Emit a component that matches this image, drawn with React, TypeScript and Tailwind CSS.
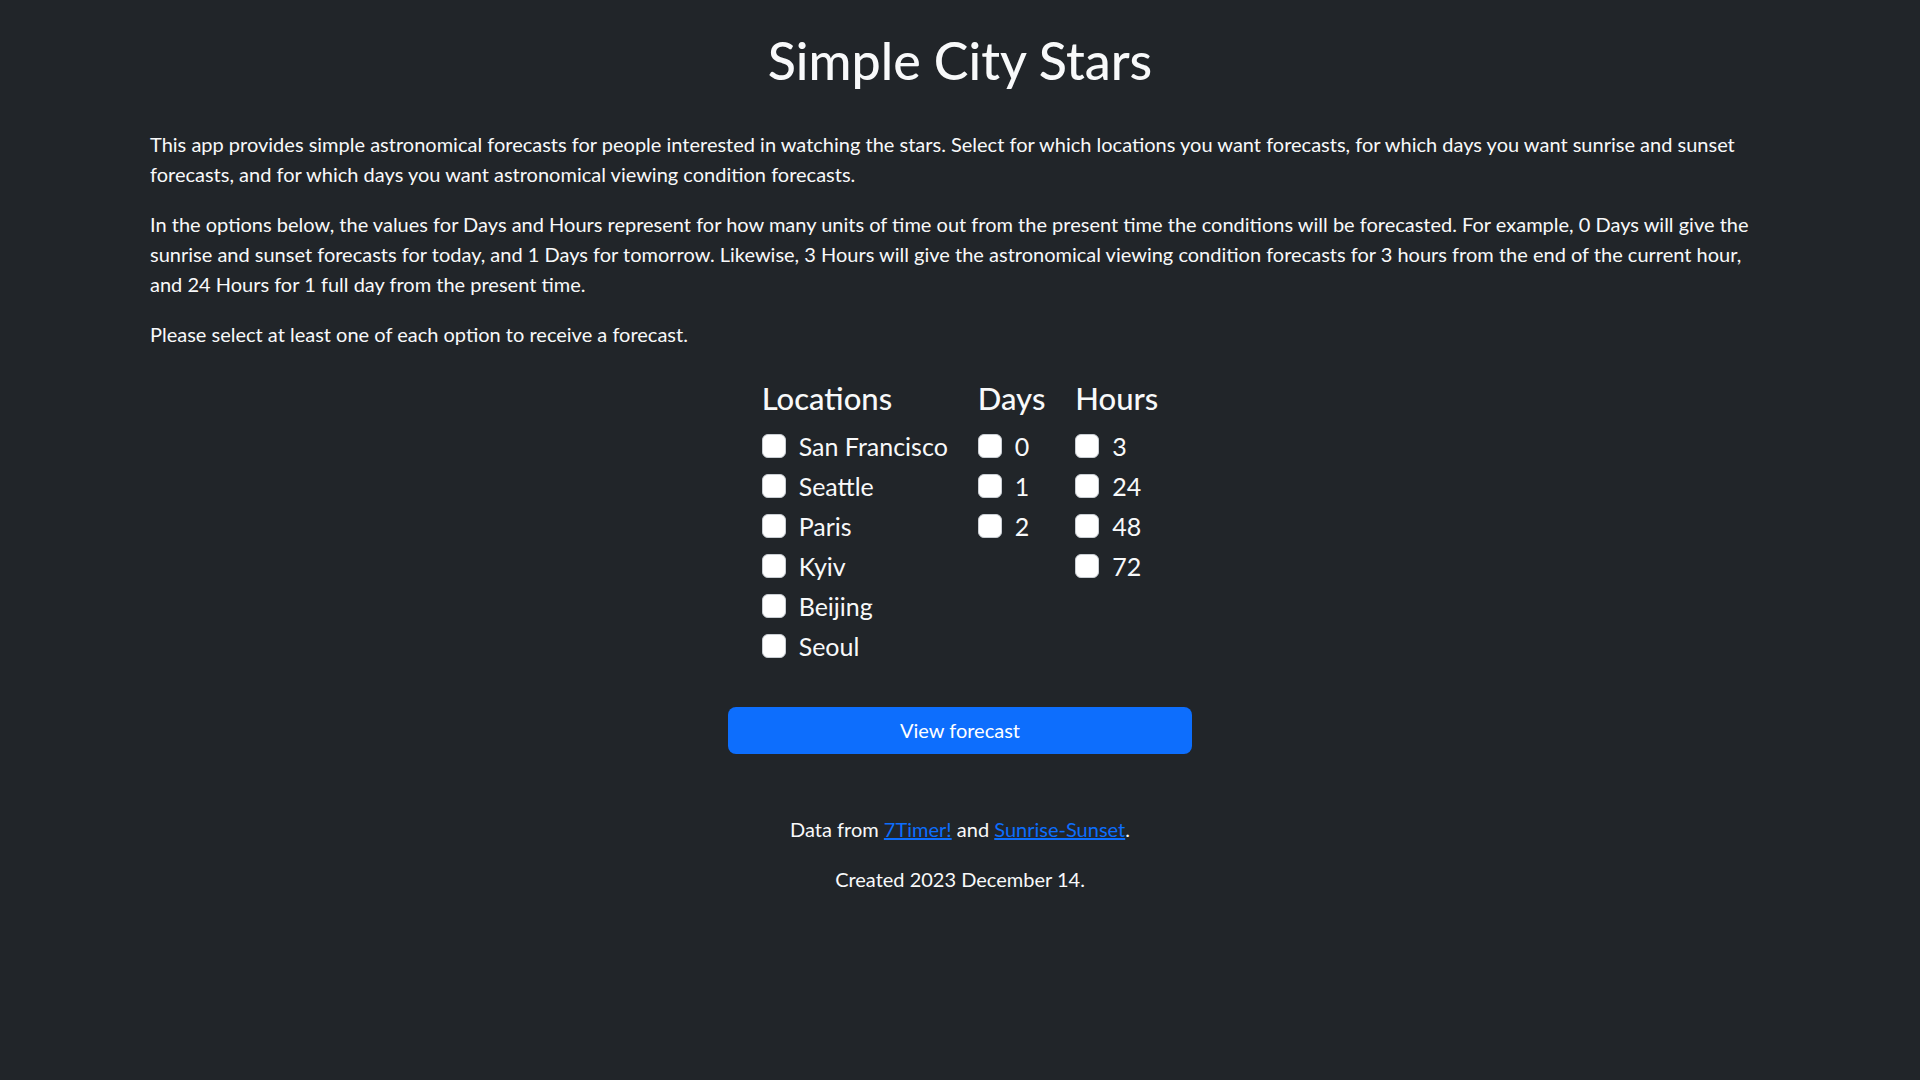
import { useState } from "react";

const locations = ["San Francisco", "Seattle", "Paris", "Kyiv", "Beijing", "Seoul"];
const days = ["0", "1", "2"];
const hours = ["3", "24", "48", "72"];

const Option = ({ label }: { label: string }) => {
  const [checked, setChecked] = useState(false);
  return (
    <label className="flex h-[36px] cursor-pointer items-center gap-[13px] text-[25px] leading-[36px]">
      <span
        className={
          "block h-[24px] w-[24px] shrink-0 rounded-[6px] border border-[#c9ced3] " +
          (checked ? "bg-[#0d6efd]" : "bg-white")
        }
        onClick={() => setChecked(!checked)}
      />
      <span>{label}</span>
    </label>
  );
};

const Column = ({ title, items }: { title: string; items: string[] }) => (
  <div className="flex flex-col">
    <h3 className="mb-[10px] text-[31px] font-medium leading-[1.2]">{title}</h3>
    <div className="flex flex-col gap-[4px]">
      {items.map((item) => (
        <Option key={item} label={item} />
      ))}
    </div>
  </div>
);

const App = () => {
  return (
    <div className="min-h-screen bg-[#212529] font-['Lato',sans-serif] text-[#f8f9fa]">
      <div className="px-[150px] pt-[29px]">
        <h1 className="mb-[38px] text-center text-[52px] font-medium leading-[1.2]">
          Simple City Stars
        </h1>
        <div className="flex flex-col gap-[20px] text-[20px] leading-[30px]">
          <p>
            This app provides simple astronomical forecasts for people interested in
            watching the stars. Select for which locations you want forecasts, for which
            days you want sunrise and sunset forecasts, and for which days you want
            astronomical viewing condition forecasts.
          </p>
          <p>
            In the options below, the values for Days and Hours represent for how many
            units of time out from the present time the conditions will be forecasted.
            For example, 0 Days will give the sunrise and sunset forecasts for today, and
            1 Days for tomorrow. Likewise, 3 Hours will give the astronomical viewing
            condition forecasts for 3 hours from the end of the current hour, and 24
            Hours for 1 full day from the present time.
          </p>
          <p>Please select at least one of each option to receive a forecast.</p>
        </div>

        <div className="mt-[31px] flex justify-center gap-[30px]">
          <Column title="Locations" items={locations} />
          <Column title="Days" items={days} />
          <Column title="Hours" items={hours} />
        </div>

        <div className="mt-[43px] flex justify-center">
          <button className="flex h-[47px] w-[464px] items-center justify-center rounded-[8px] bg-[#0d6efd] text-[20px] text-white">
            View forecast
          </button>
        </div>

        <div className="mt-[60px] flex flex-col gap-[20px] text-center text-[20px] leading-[30px]">
          <p>
            Data from{" "}
            <a href="#" className="text-[#0d6efd] underline">
              7Timer!
            </a>{" "}
            and{" "}
            <a href="#" className="text-[#0d6efd] underline">
              Sunrise-Sunset
            </a>
            .
          </p>
          <p>Created 2023 December 14.</p>
        </div>
      </div>
    </div>
  );
};

export default App;
